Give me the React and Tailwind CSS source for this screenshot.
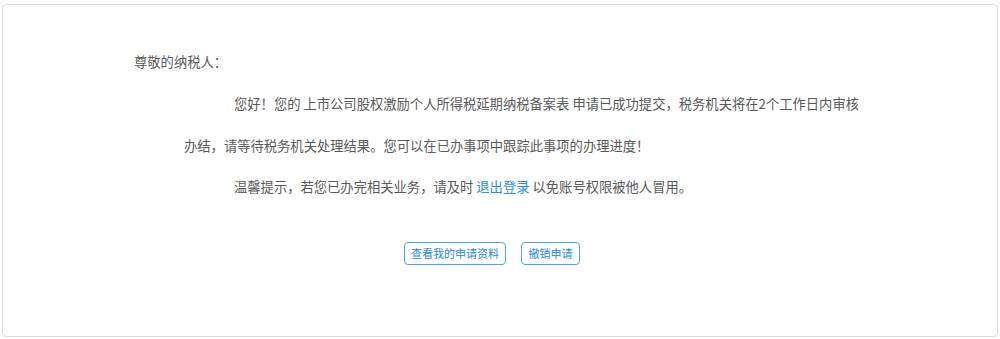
export default function App() {
  const font = { fontFamily: '"Microsoft YaHei", "Noto Sans CJK SC", "Noto Sans", sans-serif' };
  return (
    <div className="w-[1000px] h-[339px] bg-white pt-[4px] px-[2px]" style={font}>
      <div className="h-[333px] border border-[#dcdcdc] rounded-[4px] bg-white pt-[36px] pl-[131px] text-[13.3px] text-[#595959]">
        <div className="leading-[42px]">尊敬的纳税人：</div>
        <p className="ml-[50px] w-[682px] leading-[41.5px] indent-[50px]">
          您好！您的 上市公司股权激励个人所得税延期纳税备案表 申请已成功提交，税务机关将在2个工作日内审核办结，请等待税务机关处理结果。您可以在已办事项中跟踪此事项的办理进度！
        </p>
        <p className="ml-[50px] leading-[42px] indent-[50px]">
          温馨提示，若您已办完相关业务，请及时 <a className="text-[#2b8ae0] cursor-pointer">退出登录</a> 以免账号权限被他人冒用。
        </p>
        <div className="flex gap-[15px] pl-[270px] mt-[34px]">
          <button className="h-[23px] w-[102px] border border-[#4aa6e6] rounded-[4px] text-[11px] text-[#2a88d6] bg-white">
            查看我的申请资料
          </button>
          <button className="h-[23px] w-[59px] border border-[#4aa6e6] rounded-[4px] text-[11px] text-[#2a88d6] bg-white">
            撤销申请
          </button>
        </div>
      </div>
    </div>
  );
}
